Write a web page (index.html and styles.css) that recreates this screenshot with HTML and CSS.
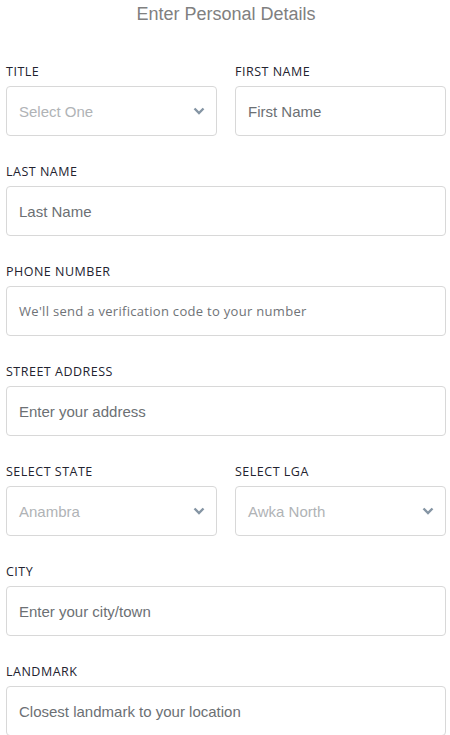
FILE: index.html
```html
<!DOCTYPE html>
<html>
<head>
<meta charset="utf-8">
<link rel="stylesheet" href="styles.css">
</head>
<body>
<div class="page">
  <h1 class="title">Enter Personal Details</h1>
  <div class="row two">
    <div class="field">
      <div class="label">TITLE</div>
      <div class="box select"><span class="ph-light">Select One</span><svg class="chev" width="12" height="8" viewBox="0 0 12 8"><path d="M1.5 1.5 L6 6 L10.5 1.5" fill="none" stroke="#8595a4" stroke-width="2.4"/></svg></div>
    </div>
    <div class="field">
      <div class="label">FIRST NAME</div>
      <div class="box"><span class="ph">First Name</span></div>
    </div>
  </div>
  <div class="row">
    <div class="field">
      <div class="label">LAST NAME</div>
      <div class="box"><span class="ph">Last Name</span></div>
    </div>
  </div>
  <div class="row">
    <div class="field">
      <div class="label">PHONE NUMBER</div>
      <div class="box"><span class="ph-mont">We'll send a verification code to your number</span></div>
    </div>
  </div>
  <div class="row">
    <div class="field">
      <div class="label">STREET ADDRESS</div>
      <div class="box"><span class="ph">Enter your address</span></div>
    </div>
  </div>
  <div class="row two">
    <div class="field">
      <div class="label">SELECT STATE</div>
      <div class="box select"><span class="ph-light">Anambra</span><svg class="chev" width="12" height="8" viewBox="0 0 12 8"><path d="M1.5 1.5 L6 6 L10.5 1.5" fill="none" stroke="#8595a4" stroke-width="2.4"/></svg></div>
    </div>
    <div class="field">
      <div class="label">SELECT LGA</div>
      <div class="box select"><span class="ph-light">Awka North</span><svg class="chev" width="12" height="8" viewBox="0 0 12 8"><path d="M1.5 1.5 L6 6 L10.5 1.5" fill="none" stroke="#8595a4" stroke-width="2.4"/></svg></div>
    </div>
  </div>
  <div class="row">
    <div class="field">
      <div class="label">CITY</div>
      <div class="box"><span class="ph">Enter your city/town</span></div>
    </div>
  </div>
  <div class="row">
    <div class="field">
      <div class="label">LANDMARK</div>
      <div class="box"><span class="ph">Closest landmark to your location</span></div>
    </div>
  </div>
</div>
</body>
</html>
```
FILE: styles.css
```css
html, body {
  margin: 0;
  padding: 0;
  background: #fff;
}
.page {
  padding: 0 4px 0 6px;
  overflow: hidden;
}
.title {
  margin: 0;
  height: 28px;
  line-height: 28px;
  text-align: center;
  font-family: "Liberation Sans", Arial, sans-serif;
  font-weight: normal;
  font-size: 18px;
  color: #808080;
}
.row {
  margin-top: 36px;
}
.row + .row {
  margin-top: 28px;
}
.row.two {
  display: grid;
  grid-template-columns: 211px 211px;
  column-gap: 18px;
}
.label {
  font-family: "Open Sans", sans-serif;
  font-size: 12.5px;
  line-height: 16px;
  height: 16px;
  color: #23232f;
  letter-spacing: 0.5px;
  margin-bottom: 6px;
}
.box {
  box-sizing: border-box;
  height: 50px;
  border: 1px solid #d8d8d8;
  border-radius: 4px;
  display: flex;
  align-items: center;
  justify-content: space-between;
  padding: 0 11px 0 12px;
}
.ph {
  font-family: "Liberation Sans", Arial, sans-serif;
  font-size: 15px;
  color: #6c7074;
}
.ph-light {
  font-family: "Liberation Sans", Arial, sans-serif;
  font-size: 15px;
  color: #b0b3b6;
}
.ph-mont {
  font-family: "Open Sans", sans-serif;
  font-size: 13px;
  letter-spacing: 0.3px;
  color: #6f7377;
}
.chev {
  display: block;
}
```
